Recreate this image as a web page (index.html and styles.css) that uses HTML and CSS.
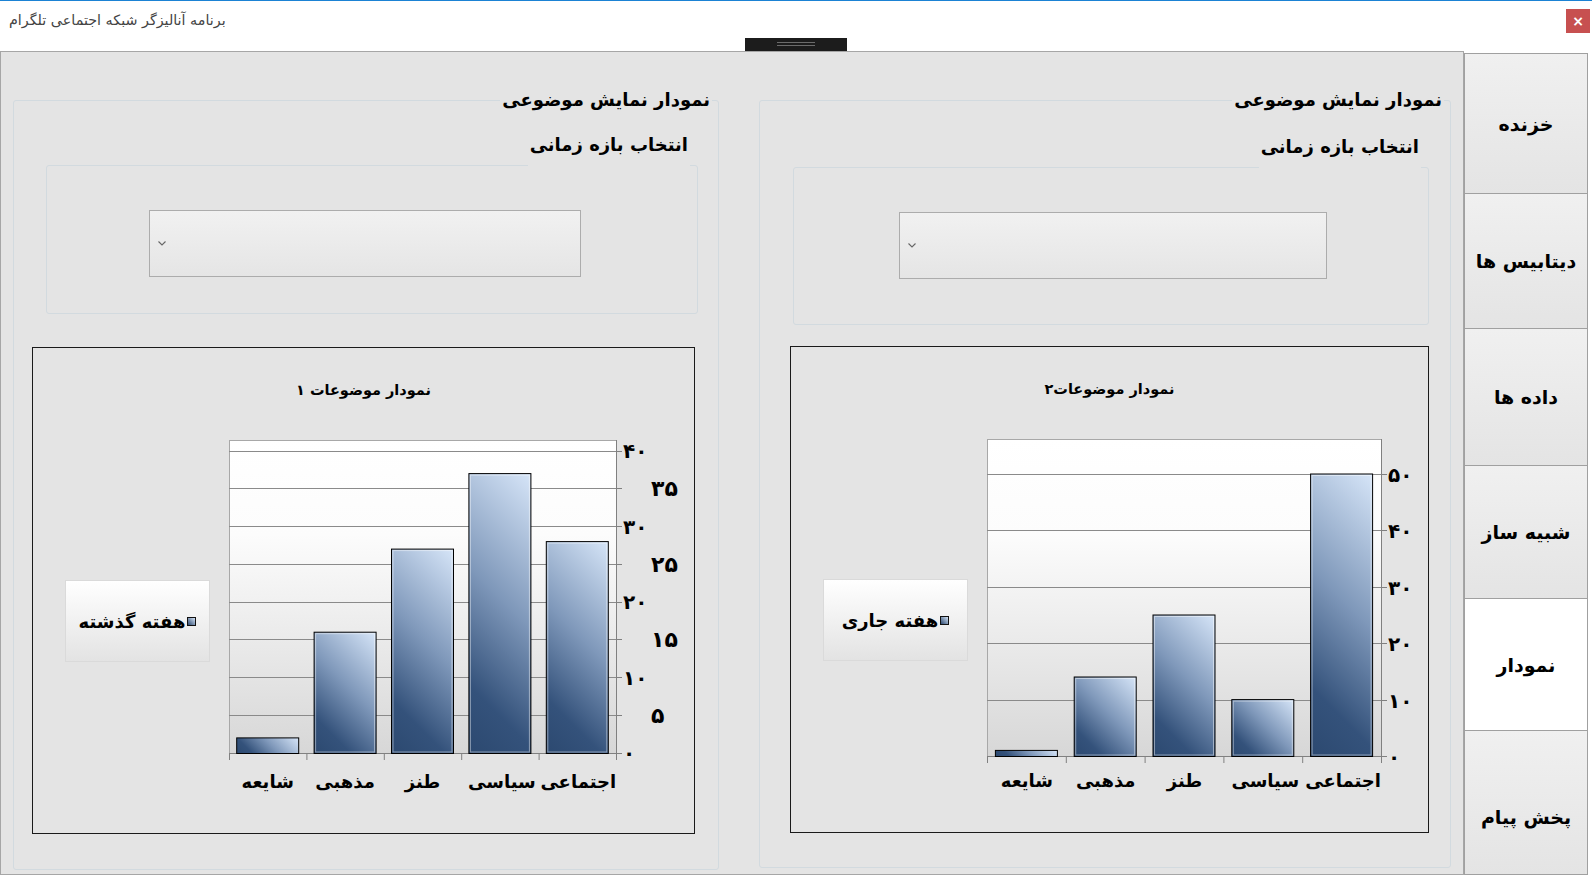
FILE: index.html
```html
<!DOCTYPE html>
<html lang="fa">
<head>
    <meta charset="UTF-8">
    <meta name="viewport" content="width=device-width, initial-scale=1.0">
    <title>برنامه آنالیزگر شبکه اجتماعی تلگرام</title>
    <link rel="stylesheet" href="styles.css">
</head>
<body>
    <div class="window">
        <div class="titlebar">
            <div class="app-title" dir="rtl">برنامه آنالیزگر شبکه اجتماعی تلگرام</div>
            <div class="grip"><span></span></div>
            <button class="close-btn">×</button>
        </div>

        <div class="workspace">
            <div class="main-panel">

                <!-- last week -->
                <fieldset class="group group-last" dir="rtl">
                    <legend>نمودار نمایش موضوعی</legend>
                    <fieldset class="range-box">
                        <legend>انتخاب بازه زمانی</legend>
                        <div class="combo">
                            <svg width="8" height="5" viewBox="0 0 8 5"><path d="M0.5 0.5L4 4L7.5 0.5" fill="none" stroke="#666" stroke-width="1.1"/></svg>
                        </div>
                    </fieldset>
                    <div class="chart">
                        <div class="chart-title">نمودار موضوعات ۱</div>
                        <div class="chart-body">
                            <div class="chart-legend"><i class="swatch"></i>هفته گذشته</div>
                            <svg class="plot" width="478" height="395" viewBox="0 0 478 395">
                                <defs>
                                    <linearGradient id="plotBg" x1="0" y1="0" x2="0" y2="1">
                                        <stop offset="0" stop-color="#ffffff"/>
                                        <stop offset="0.3" stop-color="#fcfcfc"/>
                                        <stop offset="1" stop-color="#d7d7d7"/>
                                    </linearGradient>
                                    <linearGradient id="barFill">
                                        <stop offset="0" stop-color="#d6e5f8"/>
                                        <stop offset="0.45" stop-color="#7f98ba"/>
                                        <stop offset="0.8" stop-color="#34527b"/>
                                        <stop offset="1" stop-color="#2c4970"/>
                                    </linearGradient>
                                    <linearGradient id="l0" href="#barFill" gradientUnits="userSpaceOnUse" x1="86.7" y1="310.9" x2="48.2" y2="349.5"/>
                                    <linearGradient id="l1" href="#barFill" gradientUnits="userSpaceOnUse" x1="164.1" y1="205.2" x2="72.7" y2="296.6"/>
                                    <linearGradient id="l2" href="#barFill" gradientUnits="userSpaceOnUse" x1="241.5" y1="122.1" x2="108.6" y2="255.1"/>
                                    <linearGradient id="l3" href="#barFill" gradientUnits="userSpaceOnUse" x1="318.9" y1="46.6" x2="148.2" y2="217.3"/>
                                    <linearGradient id="l4" href="#barFill" gradientUnits="userSpaceOnUse" x1="396.3" y1="114.6" x2="259.6" y2="251.3"/>
                                </defs>
                                <rect x="17.5" y="13.5" width="387" height="313" fill="url(#plotBg)" stroke="#a8a8a8"/>
                                <path class="grid" d="M17 288.5H404M17 250.5H404M17 212.5H404M17 175.5H404M17 137.5H404M17 99.5H404M17 61.5H404M17 24.5H404"/>
                                <path class="axis" d="M17 326.5H404.5M404.5 13V327"/>
                                <path class="axis" d="M404 326.5H410M404 288.5H410M404 250.5H410M404 212.5H410M404 175.5H410M404 137.5H410M404 99.5H410M404 61.5H410M404 24.5H410"/>
                                <path class="axis" d="M17.5 326V333M94.9 326V333M172.3 326V333M249.7 326V333M327.1 326V333M404.5 326V333"/>

                                <rect class="bar" x="24.7" y="310.9" width="62" height="15.6" fill="url(#l0)"/>
                                <rect class="bar" x="102.1" y="205.2" width="62" height="121.3" fill="url(#l1)"/>
                                <rect class="bar-hi" x="103.6" y="206.7" width="59" height="118.3"/>
                                <rect class="bar" x="179.5" y="122.1" width="62" height="204.4" fill="url(#l2)"/>
                                <rect class="bar-hi" x="181" y="123.6" width="59" height="201.4"/>
                                <rect class="bar" x="256.9" y="46.6" width="62" height="279.9" fill="url(#l3)"/>
                                <rect class="bar-hi" x="258.4" y="48.1" width="59" height="276.9"/>
                                <rect class="bar" x="334.3" y="114.6" width="62" height="211.9" fill="url(#l4)"/>
                                <rect class="bar-hi" x="335.8" y="116.1" width="59" height="208.9"/>

                                <text class="num" x="411" y="31">۴۰</text>
                                <text class="num num-alt" x="439" y="69">۳۵</text>
                                <text class="num" x="411" y="107">۳۰</text>
                                <text class="num num-alt" x="439" y="145">۲۵</text>
                                <text class="num" x="411" y="182">۲۰</text>
                                <text class="num num-alt" x="439" y="220">۱۵</text>
                                <text class="num" x="411" y="258">۱۰</text>
                                <text class="num num-alt" x="439" y="296">۵</text>
                                <text class="num" x="411" y="333">۰</text>

                                <text class="cat" x="55.7" y="361">شایعه</text>
                                <text class="cat" x="133.1" y="361">مذهبی</text>
                                <text class="cat" x="210.5" y="361">طنز</text>
                                <text class="cat" x="289.9" y="361">سیاسی</text>
                                <text class="cat" x="366.3" y="361">اجتماعی</text>
                            </svg>
                        </div>
                    </div>
                </fieldset>

                <!-- current week -->
                <fieldset class="group group-current" dir="rtl">
                    <legend>نمودار نمایش موضوعی</legend>
                    <fieldset class="range-box">
                        <legend>انتخاب بازه زمانی</legend>
                        <div class="combo">
                            <svg width="8" height="5" viewBox="0 0 8 5"><path d="M0.5 0.5L4 4L7.5 0.5" fill="none" stroke="#666" stroke-width="1.1"/></svg>
                        </div>
                    </fieldset>
                    <div class="chart">
                        <div class="chart-title">نمودار موضوعات۲</div>
                        <div class="chart-body">
                            <div class="chart-legend"><i class="swatch"></i>هفته جاری</div>
                            <svg class="plot" width="455" height="395" viewBox="0 0 455 395">
                                <defs>
                                    <linearGradient id="r0" href="#barFill" gradientUnits="userSpaceOnUse" x1="87.4" y1="324.4" x2="53.6" y2="358.2"/>
                                    <linearGradient id="r1" href="#barFill" gradientUnits="userSpaceOnUse" x1="166.2" y1="251" x2="95.7" y2="321.5"/>
                                    <linearGradient id="r2" href="#barFill" gradientUnits="userSpaceOnUse" x1="245" y1="189" x2="143.5" y2="290.5"/>
                                    <linearGradient id="r3" href="#barFill" gradientUnits="userSpaceOnUse" x1="323.8" y1="273.6" x2="264.6" y2="332.8"/>
                                    <linearGradient id="r4" href="#barFill" gradientUnits="userSpaceOnUse" x1="402.6" y1="48" x2="230.6" y2="220"/>
                                </defs>
                                <rect x="17.5" y="13.5" width="394" height="317" fill="url(#plotBg)" stroke="#a8a8a8"/>
                                <path class="grid" d="M17 274.5H411M17 217.5H411M17 161.5H411M17 104.5H411M17 48.5H411"/>
                                <path class="axis" d="M17 330.5H411.5M411.5 13V331"/>
                                <path class="axis" d="M411 330.5H417M411 274.5H417M411 217.5H417M411 161.5H417M411 104.5H417M411 48.5H417"/>
                                <path class="axis" d="M17.5 330V337M96.3 330V337M175.1 330V337M253.9 330V337M332.7 330V337M411.5 330V337"/>

                                <rect class="bar" x="25.4" y="324.4" width="62" height="6.1" fill="url(#r0)"/>
                                <rect class="bar" x="104.2" y="251" width="62" height="79.5" fill="url(#r1)"/>
                                <rect class="bar-hi" x="105.7" y="252.5" width="59" height="76.5"/>
                                <rect class="bar" x="183" y="189" width="62" height="141.5" fill="url(#r2)"/>
                                <rect class="bar-hi" x="184.5" y="190.5" width="59" height="138.5"/>
                                <rect class="bar" x="261.8" y="273.6" width="62" height="56.9" fill="url(#r3)"/>
                                <rect class="bar-hi" x="263.3" y="275.1" width="59" height="53.9"/>
                                <rect class="bar" x="340.6" y="48" width="62" height="282.5" fill="url(#r4)"/>
                                <rect class="bar-hi" x="342.1" y="49.5" width="59" height="279.5"/>

                                <text class="num" x="418" y="56">۵۰</text>
                                <text class="num" x="418" y="112">۴۰</text>
                                <text class="num" x="418" y="169">۳۰</text>
                                <text class="num" x="418" y="225">۲۰</text>
                                <text class="num" x="418" y="282">۱۰</text>
                                <text class="num" x="418" y="338">۰</text>

                                <text class="cat" x="56.9" y="361">شایعه</text>
                                <text class="cat" x="135.7" y="361">مذهبی</text>
                                <text class="cat" x="214.5" y="361">طنز</text>
                                <text class="cat" x="295.3" y="361">سیاسی</text>
                                <text class="cat" x="373.1" y="361">اجتماعی</text>
                            </svg>
                        </div>
                    </div>
                </fieldset>

            </div>

            <div class="tabs" dir="rtl">
                <div class="tab">خزنده</div>
                <div class="tab">دیتابیس ها</div>
                <div class="tab">داده ها</div>
                <div class="tab">شبیه ساز</div>
                <div class="tab active">نمودار</div>
                <div class="tab">پخش پیام</div>
            </div>
        </div>
    </div>
</body>
</html>
```

FILE: styles.css
```css
* {
    box-sizing: border-box;
}

body {
    margin: 0;
    width: 1592px;
    height: 879px;
    overflow: hidden;
    background-color: #fff;
    font-family: "DejaVu Sans", sans-serif;
    color: #000;
}

.window {
    height: 879px;
    border-top: 1px solid #1b82d4;
    display: flex;
    flex-direction: column;
}

/* title bar */

.titlebar {
    height: 50px;
    display: grid;
    grid-template-columns: 1fr auto 1fr;
}

.app-title {
    justify-self: start;
    margin: 11px 0 0 9px;
    font-size: 14.3px;
    color: #444;
}

.grip {
    align-self: end;
    width: 102px;
    height: 13px;
    background-color: #1c1c1c;
    display: flex;
    justify-content: center;
    padding-top: 4px;
}

.grip span {
    width: 38px;
    height: 4px;
    border-top: 1px solid #6b6b6b;
    border-bottom: 1px solid #6b6b6b;
}

.close-btn {
    justify-self: end;
    width: 24px;
    height: 24px;
    margin: 8px 2px 0 0;
    padding: 0;
    border: none;
    background-color: #c75050;
    color: #fff;
    font-family: "DejaVu Sans", sans-serif;
    font-size: 14px;
    font-weight: bold;
    line-height: 22px;
}

/* workspace */

.workspace {
    flex: 1;
    display: flex;
    padding-bottom: 4px;
}

.main-panel {
    width: 1464px;
    border: 1px solid #a6a6a6;
    background-color: #e4e4e4;
    display: flex;
    padding-left: 12px;
}

.group {
    margin: 33px 0 4px;
    padding: 0;
    border: 1px solid #d2dadf;
    border-radius: 3px;
    min-width: 0;
}

.group > legend {
    font-size: 18px;
    font-weight: bold;
    line-height: 30px;
    padding: 0 2px;
    margin-right: 6px;
}

.group-last {
    width: 706px;
}

.group-current {
    width: 692px;
    margin-left: 40px;
    margin-bottom: 6px;
}

.range-box {
    margin: 15px 20px 0 32px;
    padding: 0 0 36px;
    border: 1px solid #d2dadf;
    border-radius: 3px;
    min-width: 0;
}

.range-box > legend {
    font-size: 18px;
    font-weight: bold;
    line-height: 30px;
    padding: 0 2px 40px;
    margin-right: 7px;
}

.group-current .range-box {
    margin: 17px 21px 0 33px;
    padding-bottom: 45px;
}

.combo {
    direction: ltr;
    width: 432px;
    height: 67px;
    margin: 10px auto 0 102px;
    border: 1px solid #acacac;
    background: linear-gradient(#f1f1f1, #e5e5e5);
    display: flex;
    align-items: center;
    padding-left: 8px;
}

.group-current .combo {
    width: 428px;
    margin-left: 105px;
}

/* chart */

.chart {
    direction: ltr;
    width: 663px;
    height: 487px;
    margin: 33px auto 0 18px;
    border: 1px solid #1a1a1a;
}

.group-current .chart {
    width: 639px;
    margin: 21px auto 0 30px;
}

.chart-title {
    direction: rtl;
    height: 55px;
    padding-top: 30px;
    text-align: center;
    font-size: 14.5px;
    font-weight: bold;
    line-height: 24px;
}

.chart-body {
    display: flex;
    margin-top: 24px;
}

.chart-legend {
    direction: rtl;
    width: 145px;
    height: 82px;
    margin: 153px 2px 0 32px;
    border: 1px solid #dadada;
    background: linear-gradient(#ffffff, #e3e3e3);
    display: flex;
    align-items: center;
    justify-content: center;
    font-size: 18px;
    font-weight: bold;
}

.swatch {
    width: 9px;
    height: 9px;
    margin-left: 2px;
    border: 1px solid #111;
    background: linear-gradient(225deg, #d6e5f8, #2c4970);
}

.plot {
    display: block;
    flex: none;
}

.plot .grid {
    stroke: #8a8a8a;
    fill: none;
}

.plot .axis {
    stroke: #808080;
    fill: none;
}

.plot .bar {
    stroke: #000;
    stroke-width: 1;
}

.plot .bar-hi {
    fill: none;
    stroke: rgba(255, 255, 255, 0.45);
}

.plot .num {
    font-family: "DejaVu Sans", sans-serif;
    font-size: 20px;
    font-weight: bold;
}

.plot .num-alt {
    font-size: 22px;
}

.plot .cat {
    font-family: "DejaVu Sans", sans-serif;
    font-size: 18px;
    font-weight: bold;
    text-anchor: middle;
}

/* side tabs */

.tabs {
    width: 124px;
    margin-top: 2px;
    display: flex;
    flex-direction: column;
    border: 1px solid #a0a0a0;
}

.tab {
    height: 137px;
    display: flex;
    align-items: center;
    justify-content: center;
    background: linear-gradient(#f0f0f0, #e4e4e4);
    font-size: 19px;
    font-weight: bold;
}

.tab + .tab {
    border-top: 1px solid #a0a0a0;
}

.tab:nth-child(1) { height: 139px; }
.tab:nth-child(2) { height: 135px; }
.tab:nth-child(4) { height: 133px; }
.tab:nth-child(5) { height: 132px; }

.tab:last-child {
    flex: 1;
    padding-top: 28px;
}

.tab.active {
    background: #fff;
}
```
